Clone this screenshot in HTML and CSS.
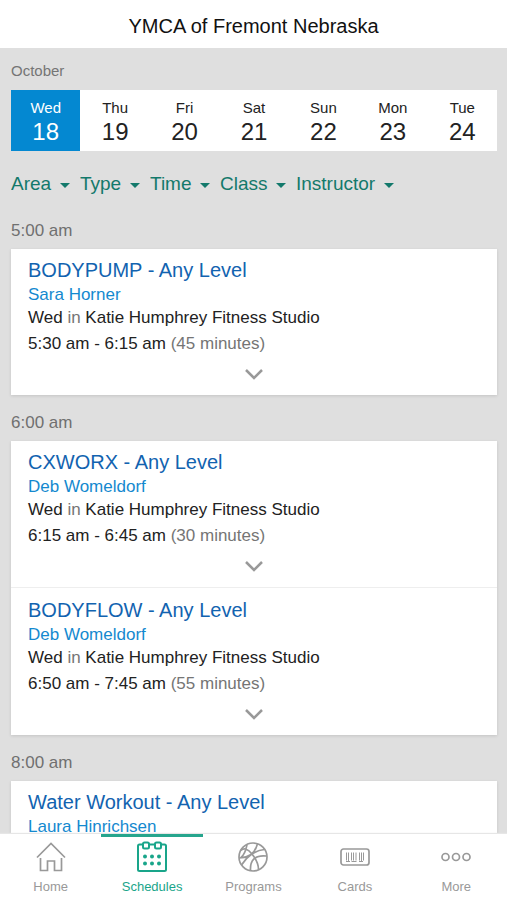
FILE: index.html
```html
<!DOCTYPE html>
<html lang="en">
<head>
<meta charset="utf-8">
<meta name="viewport" content="width=device-width, initial-scale=1">
<title>YMCA of Fremont Nebraska</title>
<link rel="stylesheet" href="styles.css">
</head>
<body>
<header class="topbar"><h1>YMCA of Fremont Nebraska</h1></header>

<main class="content">
  <h2 class="month">October</h2>
  <div class="days">
    <button class="day selected" aria-pressed="true"><span>Wed</span><b>18</b></button>
    <button class="day"><span>Thu</span><b>19</b></button>
    <button class="day"><span>Fri</span><b>20</b></button>
    <button class="day"><span>Sat</span><b>21</b></button>
    <button class="day"><span>Sun</span><b>22</b></button>
    <button class="day"><span>Mon</span><b>23</b></button>
    <button class="day"><span>Tue</span><b>24</b></button>
  </div>

  <div class="filters">
    <label class="filter"><select aria-label="Area"><option>Area</option></select></label>
    <label class="filter"><select aria-label="Type"><option>Type</option></select></label>
    <label class="filter"><select aria-label="Time"><option>Time</option></select></label>
    <label class="filter"><select aria-label="Class"><option>Class</option></select></label>
    <label class="filter"><select aria-label="Instructor"><option>Instructor</option></select></label>
  </div>

  <section>
    <h2 class="hour">5:00 am</h2>
    <div class="card">
      <article class="session">
        <h3><a href="#">BODYPUMP - Any Level</a></h3>
        <a class="coach" href="#">Sara Horner</a>
        <p>Wed <span>in</span> Katie Humphrey Fitness Studio</p>
        <p class="time">5:30 am - 6:15 am <span>(45 minutes)</span></p>
        <button class="expand" aria-label="Show details"><svg viewBox="0 0 18 12"><path d="M1 2 9 10 17 2"/></svg></button>
      </article>
    </div>
  </section>

  <section>
    <h2 class="hour">6:00 am</h2>
    <div class="card">
      <article class="session">
        <h3><a href="#">CXWORX - Any Level</a></h3>
        <a class="coach" href="#">Deb Womeldorf</a>
        <p>Wed <span>in</span> Katie Humphrey Fitness Studio</p>
        <p class="time">6:15 am - 6:45 am <span>(30 minutes)</span></p>
        <button class="expand" aria-label="Show details"><svg viewBox="0 0 18 12"><path d="M1 2 9 10 17 2"/></svg></button>
      </article>
      <article class="session">
        <h3><a href="#">BODYFLOW - Any Level</a></h3>
        <a class="coach" href="#">Deb Womeldorf</a>
        <p>Wed <span>in</span> Katie Humphrey Fitness Studio</p>
        <p class="time">6:50 am - 7:45 am <span>(55 minutes)</span></p>
        <button class="expand" aria-label="Show details"><svg viewBox="0 0 18 12"><path d="M1 2 9 10 17 2"/></svg></button>
      </article>
    </div>
  </section>

  <section>
    <h2 class="hour">8:00 am</h2>
    <div class="card">
      <article class="session">
        <h3><a href="#">Water Workout - Any Level</a></h3>
        <a class="coach" href="#">Laura Hinrichsen</a>
      </article>
    </div>
  </section>
</main>

<nav class="tabs">
  <a href="#">
    <svg viewBox="0 0 32 32"><path d="M2 16.500 16 2.500l14 14M5.500 17v12.500h7V20h7v9.500h7V17"/></svg>
    Home
  </a>
  <a href="#" class="active" aria-current="page">
    <svg viewBox="0 0 32 32"><g stroke-width="2"><path d="M7 3.500H3.500a1.500 1.500 0 0 0-1.500 1.500V28.500a1.500 1.500 0 0 0 1.500 1.500h25a1.500 1.500 0 0 0 1.500-1.500V5a1.500 1.500 0 0 0-1.500-1.500H25M13 3.500h6"/><rect x="7" y="1.500" width="6" height="6" rx="1.500"/><rect x="19" y="1.500" width="6" height="6" rx="1.500"/></g><g fill="currentColor" stroke="none"><circle cx="9" cy="15.500" r="2"/><circle cx="16" cy="15.500" r="2"/><circle cx="23" cy="15.500" r="2"/><circle cx="9" cy="22.500" r="2"/><circle cx="16" cy="22.500" r="2"/><circle cx="23" cy="22.500" r="2"/></g></svg>
    Schedules
  </a>
  <a href="#">
    <svg viewBox="0 0 32 32"><circle cx="16" cy="16" r="14"/><path d="M4 9.500C7 6.500 11 8 15 13c4 5 6.500 10 6.500 15.500M2.200 17C11 17 18 12.500 20.500 2.800M4.500 24C10 15 19 9 27.500 8.500M10 3.500c-1 5-1.500 9-6 13M13.500 29.500C13 20 17 13.500 29.800 15"/></svg>
    Programs
  </a>
  <a href="#">
    <svg viewBox="0 0 32 32"><rect x="2" y="8" width="28" height="16" rx="2.500"/><g stroke-width="1"><path d="M7.500 11.500v8M9.500 11.500v9M12.500 11.500v8M14.500 11.500v8M17 11.500v8M20.500 11.500v8M22.500 11.500v9M24.500 11.500v8"/><path d="M7 20.500h4M12.500 20.500h5M20 20.500h4"/></g></svg>
    Cards
  </a>
  <a href="#">
    <svg viewBox="0 0 32 32"><circle cx="5.500" cy="16" r="3.500"/><circle cx="16" cy="16" r="3.500"/><circle cx="26.500" cy="16" r="3.500"/></svg>
    More
  </a>
</nav>
</body>
</html>
```
FILE: styles.css
```css
* {
  box-sizing: border-box;
}

body {
  margin: 0;
  height: 100vh;
  display: flex;
  flex-direction: column;
  background: #dfdfdf;
  color: #222;
  font-family: "Liberation Sans", Arial, sans-serif;
  font-size: 17px;
}

h1, h2, h3, p {
  margin: 0;
  font-weight: 400;
}

a {
  text-decoration: none;
}

button, select {
  margin: 0;
  padding: 0;
  border: 0;
  background: none;
  color: inherit;
  font: inherit;
}

.topbar {
  flex: none;
  padding: 14px 0 10px;
  background: #fff;
  text-align: center;
}

.topbar h1 {
  font-size: 20px;
  line-height: 24px;
  color: #111;
}

.content {
  flex: 1;
  min-height: 0;
  overflow: hidden;
  padding: 13px 10px 0 11px;
}

.month {
  font-size: 15px;
  line-height: 20px;
  color: #757575;
  margin-bottom: 9px;
}

.days {
  display: grid;
  grid-template-columns: repeat(7, 1fr);
  background: #fff;
}

.day {
  padding: 8px 0 5px;
  text-align: center;
  color: #222;
}

.day span {
  display: block;
  font-size: 15px;
  line-height: 19px;
}

.day b {
  display: block;
  font-size: 24px;
  line-height: 29px;
  font-weight: 400;
}

.day.selected {
  background: #0488d1;
  color: #fff;
}

.filters {
  display: flex;
  gap: 10px;
  margin: 21px 0 23px;
}

.filter {
  position: relative;
  color: #13796b;
}

.filter select {
  display: block;
  appearance: none;
  padding-right: 18px;
  font-size: 19px;
  line-height: 24px;
}

.filter::after {
  content: "";
  position: absolute;
  right: 0;
  top: 11px;
  border: 5px solid transparent;
  border-top-color: currentColor;
  border-bottom: 0;
  pointer-events: none;
}

.hour {
  font-size: 17px;
  line-height: 24px;
  color: #707070;
  margin-bottom: 6px;
}

.card {
  background: #fff;
  margin-bottom: 16px;
  box-shadow: 0 1px 3px rgba(0, 0, 0, 0.12);
}

.session {
  padding: 8px 17px 9px;
}

.session + .session {
  padding-top: 9px;
  border-top: 1px solid #eee;
}

.session h3 {
  font-size: 20px;
  line-height: 26px;
}

.session h3 a {
  color: #1263b0;
}

.coach {
  display: block;
  line-height: 23px;
  color: #1489cf;
}

.session p {
  line-height: 24px;
}

.session .time {
  line-height: 27px;
}

.session span {
  color: #757575;
}

.expand {
  display: flex;
  width: 100%;
  height: 29px;
  padding-top: 4px;
  align-items: center;
  justify-content: center;
}

.expand svg {
  width: 18px;
  height: 12px;
  fill: none;
  stroke: #999;
  stroke-width: 2.5;
}

.tabs {
  position: relative;
  flex: none;
  display: grid;
  grid-template-columns: repeat(5, 1fr);
  background: #fff;
  box-shadow: 0 -1px 1px #e6e6e6;
}

.tabs a {
  display: flex;
  flex-direction: column;
  align-items: center;
  gap: 5px;
  padding: 4px 0;
  border-top: 3px solid transparent;
  font-size: 13px;
  line-height: 18px;
  color: #999;
}

.tabs svg {
  width: 32px;
  height: 32px;
  fill: none;
  stroke: currentColor;
  stroke-width: 1.7;
}

.tabs .active {
  border-top-color: #26a58d;
  color: #19a58a;
}
```
